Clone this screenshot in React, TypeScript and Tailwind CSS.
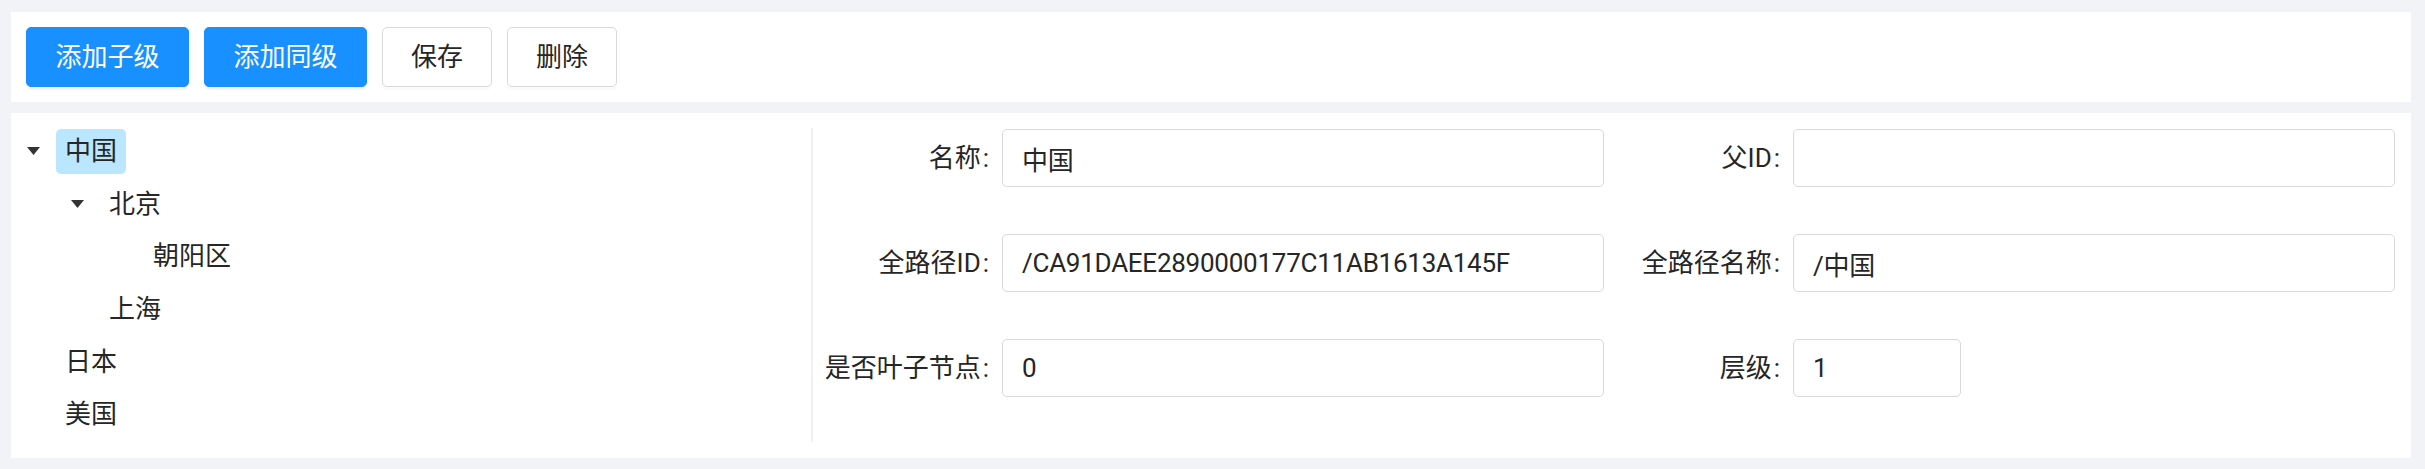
import React from 'react';

type Node = {
  label: string;
  level: number;
  open?: boolean;
  selected?: boolean;
};

const nodes: Node[] = [
  { label: '中国', level: 0, open: true, selected: true },
  { label: '北京', level: 1, open: true },
  { label: '朝阳区', level: 2 },
  { label: '上海', level: 1 },
  { label: '日本', level: 0 },
  { label: '美国', level: 0 }
];

const indents = ['pl-0', 'pl-[44px]', 'pl-[88px]'];

function Caret() {
  return (
    <svg width="13" height="8" viewBox="0 0 13 8" className="block">
      <polygon points="0,0 13,0 6.5,8" fill="#333" />
    </svg>
  );
}

function TreeRow({ node }: { node: Node }) {
  return (
    <div className={`flex h-[52.7px] items-center ${indents[node.level]}`}>
      <span className="flex w-[45px] shrink-0 justify-center">
        {node.open && <Caret />}
      </span>
      <span
        className={`h-[45px] rounded-[5px] px-[9px] leading-[45px] ${
          node.selected ? 'bg-[#bae7ff]' : ''
        }`}
      >
        {node.label}
      </span>
    </div>
  );
}

function Field({
  label,
  value,
  narrow
}: {
  label: string;
  value: string;
  narrow?: boolean;
}) {
  return (
    <div className="flex items-center">
      <label className="w-[189px] shrink-0 whitespace-nowrap text-right">
        {label}
        <span className="ml-[2px] mr-[13px]">:</span>
      </label>
      <input
        readOnly
        value={value}
        className={`h-[58px] rounded-[5px] border border-[#d9d9d9] bg-white px-[19px] tracking-[-0.25px] text-[#262626] outline-none ${
          narrow ? 'w-[168px]' : 'min-w-0 flex-1'
        }`}
      />
    </div>
  );
}

export default function App() {
  return (
    <div className="min-h-[469px] bg-[#f2f3f7] pb-[11px] pl-[11px] pr-[14px] pt-[12px] font-['Roboto','Noto_Sans_CJK_SC',sans-serif] text-[26px] text-[#262626]">
      <div className="flex gap-[15px] bg-white p-[15px]">
        <button className="h-[60px] rounded-[5px] border border-[#1890ff] bg-[#1890ff] px-[28.5px] text-white shadow-[0_3px_0_rgba(0,0,0,0.045)]">
          添加子级
        </button>
        <button className="h-[60px] rounded-[5px] border border-[#1890ff] bg-[#1890ff] px-[28.5px] text-white shadow-[0_3px_0_rgba(0,0,0,0.045)]">
          添加同级
        </button>
        <button className="h-[60px] rounded-[5px] border border-[#d9d9d9] bg-white px-[28px] shadow-[0_3px_0_rgba(0,0,0,0.015)]">
          保存
        </button>
        <button className="h-[60px] rounded-[5px] border border-[#d9d9d9] bg-white px-[28px] shadow-[0_3px_0_rgba(0,0,0,0.015)]">
          删除
        </button>
      </div>

      <div className="mt-[11px] flex bg-white pb-[16px] pt-[15px]">
        <div className="h-[314px] w-[802px] shrink-0 border-r-2 border-[#f0f0f0]">
          <div className="-mt-[3px]">
            {nodes.map((n) => (
              <TreeRow key={n.label} node={n} />
            ))}
          </div>
        </div>
        <div className="grid flex-1 grid-cols-2 content-start gap-y-[47px] pr-[16px] pt-px">
          <Field label="名称" value="中国" />
          <Field label="父ID" value="" />
          <Field label="全路径ID" value="/CA91DAEE2890000177C11AB1613A145F" />
          <Field label="全路径名称" value="/中国" />
          <Field label="是否叶子节点" value="0" />
          <Field label="层级" value="1" narrow />
        </div>
      </div>
    </div>
  );
}
